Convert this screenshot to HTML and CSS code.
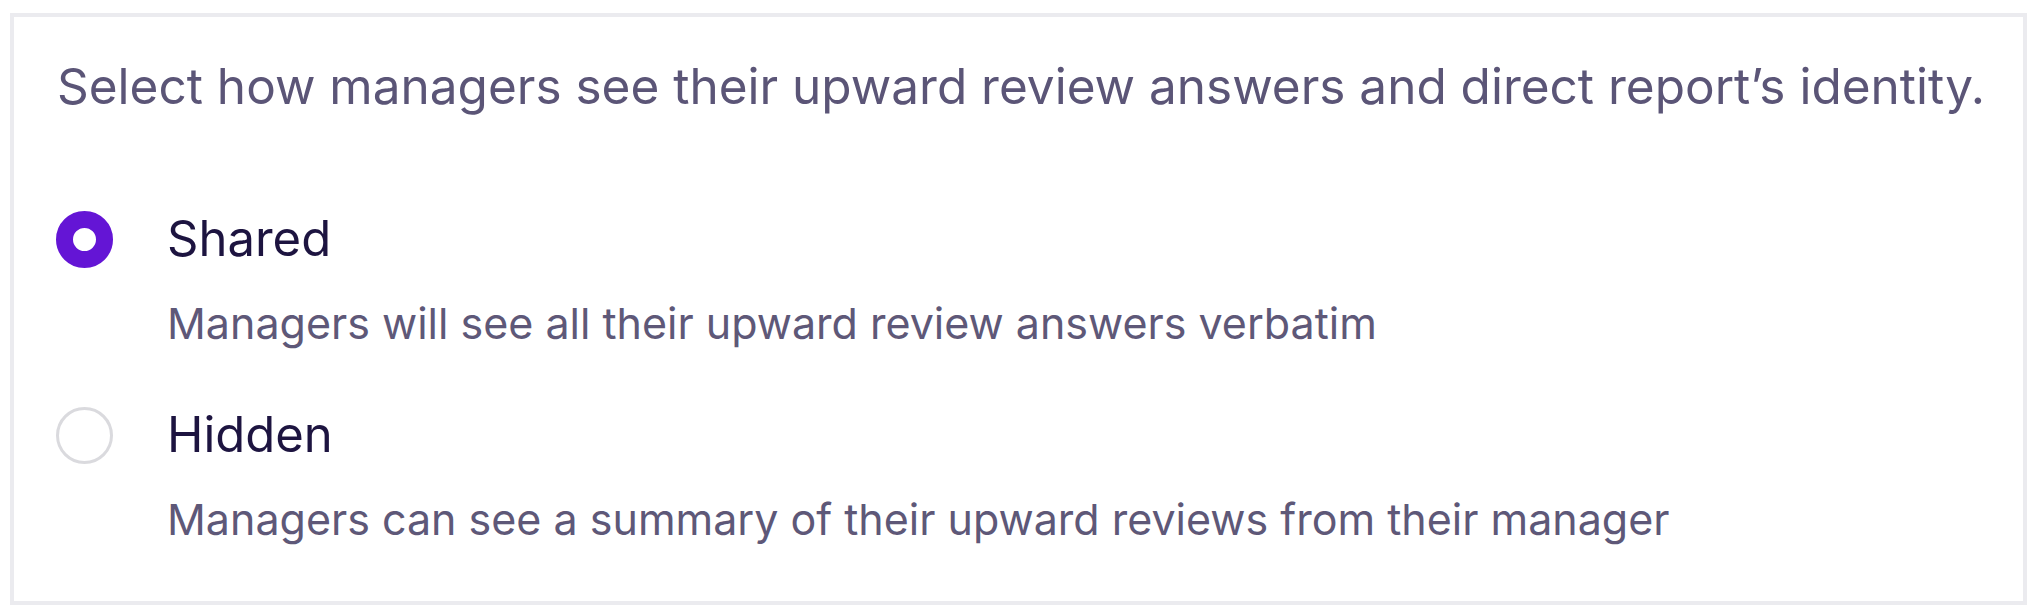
FILE: index.html
```
<!DOCTYPE html>
<html lang="en">
<head>
<meta charset="utf-8">
<title>Upward review visibility</title>
<link rel="stylesheet" href="styles.css">
</head>
<body>
<div class="page">
  <section class="card">
    <p class="intro">Select how managers see their upward review answers and direct report’s identity.</p>
    <div class="options">
      <label class="option">
        <span class="radio radio--checked"></span>
        <span class="option-title">Shared</span>
        <span class="option-desc">Managers will see all their upward review answers verbatim</span>
      </label>
      <label class="option">
        <span class="radio"></span>
        <span class="option-title">Hidden</span>
        <span class="option-desc">Managers can see a summary of their upward reviews from their manager</span>
      </label>
    </div>
  </section>
</div>
</body>
</html>
```
FILE: styles.css
```
html, body {
  margin: 0;
  padding: 0;
  background: #ffffff;
}

body {
  font-family: Inter, "Noto Sans", sans-serif;
}

.page {
  padding: 13px 11px 0 10px;
}

.card {
  border: 4px solid #ebebef;
  padding: 39px 30px 54px 42px;
  background: #ffffff;
}

.intro {
  margin: 0 0 93px 1px;
  font-size: 49.5px;
  line-height: 60px;
  color: #5b5577;
  letter-spacing: 0;
  white-space: nowrap;
}

.options {
  display: flex;
  flex-direction: column;
  gap: 54px;
}

.option {
  display: grid;
  grid-template-columns: 57px 1fr;
  column-gap: 54px;
  row-gap: 26px;
  align-items: center;
}

.radio {
  grid-column: 1;
  grid-row: 1;
  width: 57px;
  height: 57px;
  box-sizing: border-box;
  border-radius: 50%;
  border: 3px solid #dadade;
  background: #ffffff;
}

.radio--checked {
  border: 17.5px solid #6415d5;
}

.option-title {
  grid-column: 2;
  grid-row: 1;
  font-size: 49px;
  line-height: 60px;
  color: #1d1440;
}

.option-desc {
  grid-column: 2;
  grid-row: 2;
  font-size: 43px;
  line-height: 56px;
  color: #5e5878;
}
```
